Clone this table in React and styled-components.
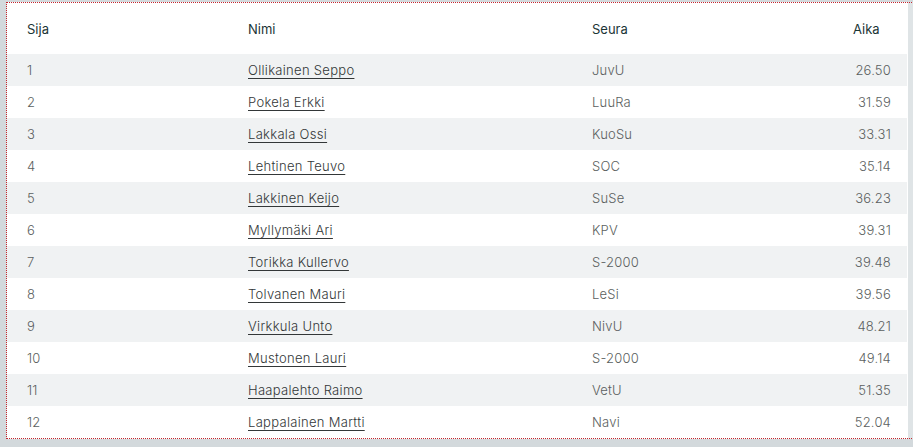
import styled, { createGlobalStyle } from "styled-components";

const GlobalStyle = createGlobalStyle`
  html, body {
    margin: 0;
    padding: 0;
    background: #d3d9dc;
    overflow: hidden;
  }
  body {
    font-family: Inter, "Noto Sans", "Liberation Sans", sans-serif;
  }
  *, *::before, *::after {
    box-sizing: border-box;
  }
`;

const Outline = styled.div`
  margin: 2px 0 0 6px;
  width: 920px;
  border: 1px dotted #c4262e;
  border-right: none;
  background: linear-gradient(90deg, #ffffff 0 901px, #dfe4e6 901px);
`;

const Panel = styled.div`
  width: 900px;
  background: #fff;
`;

const Table = styled.table`
  width: 100%;
  border-collapse: collapse;
  table-layout: fixed;
  font-size: 13px;
`;

const Th = styled.th`
  height: 51px;
  padding: 0 0 0 20px;
  text-align: left;
  font-weight: 400;
  color: #1b3536;
  width: ${(p) => p.$w || "auto"};
`;

const Row = styled.tr`
  height: 32px;
  background: ${(p) => (p.$odd ? "#f0f2f3" : "#fff")};
`;

const Td = styled.td`
  padding: 0 ${(p) => (p.$right ? "16px" : "0")} 0 ${(p) => (p.$right ? "0" : "20px")};
  text-align: ${(p) => (p.$right ? "right" : "left")};
  color: #5b5f60;
  font-weight: 300;
  letter-spacing: 0.2px;
  white-space: nowrap;
`;

const NameLink = styled.a`
  color: #333738;
  font-weight: 300;
  letter-spacing: 0.3px;
  text-decoration: underline;
  text-underline-offset: 3px;
  text-decoration-thickness: 1px;
  cursor: pointer;
`;

const results = [
  ["Ollikainen Seppo", "JuvU", "26.50"],
  ["Pokela Erkki", "LuuRa", "31.59"],
  ["Lakkala Ossi", "KuoSu", "33.31"],
  ["Lehtinen Teuvo", "SOC", "35.14"],
  ["Lakkinen Keijo", "SuSe", "36.23"],
  ["Myllymäki Ari", "KPV", "39.31"],
  ["Torikka Kullervo", "S-2000", "39.48"],
  ["Tolvanen Mauri", "LeSi", "39.56"],
  ["Virkkula Unto", "NivU", "48.21"],
  ["Mustonen Lauri", "S-2000", "49.14"],
  ["Haapalehto Raimo", "VetU", "51.35"],
  ["Lappalainen Martti", "Navi", "52.04"],
];

export default function App() {
  return (
    <>
      <GlobalStyle />
      <Outline>
        <Panel>
          <Table>
            <thead>
              <tr>
                <Th $w="221px">Sija</Th>
                <Th $w="344px">Nimi</Th>
                <Th $w="261px">Seura</Th>
                <Th>Aika</Th>
              </tr>
            </thead>
            <tbody>
              {results.map(([name, club, time], i) => (
                <Row key={name} $odd={i % 2 === 0}>
                  <Td>{i + 1}</Td>
                  <Td>
                    <NameLink>{name}</NameLink>
                  </Td>
                  <Td>{club}</Td>
                  <Td $right>{time}</Td>
                </Row>
              ))}
            </tbody>
          </Table>
        </Panel>
      </Outline>
    </>
  );
}
